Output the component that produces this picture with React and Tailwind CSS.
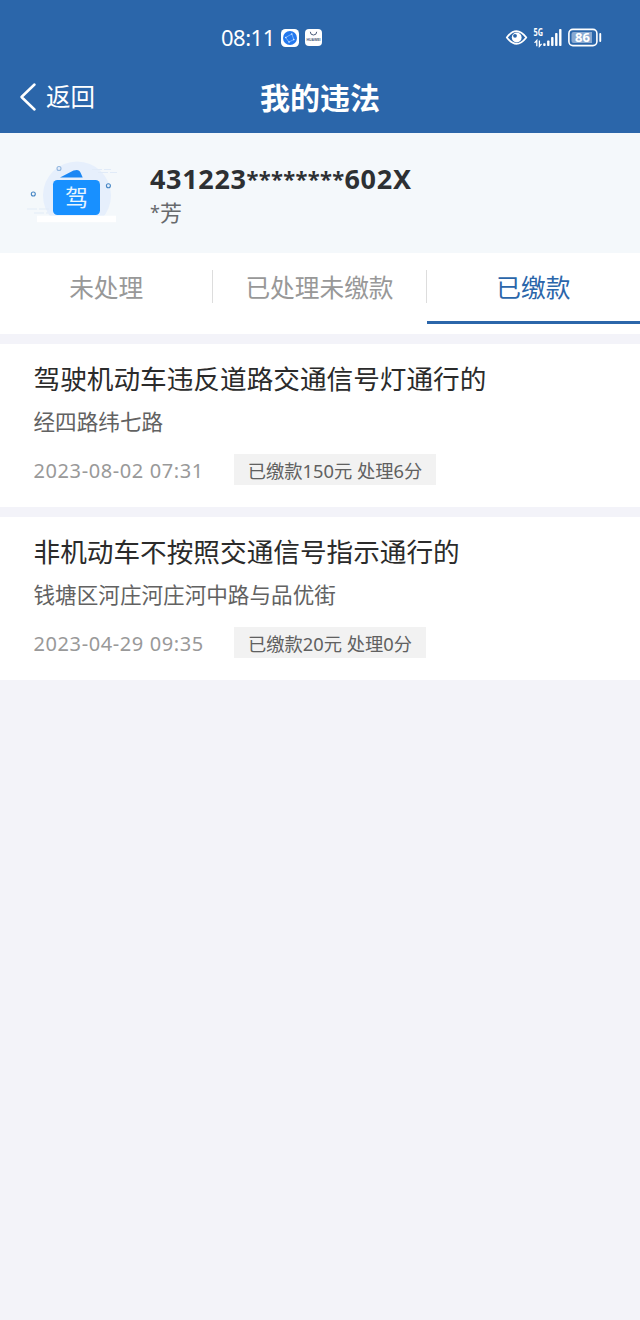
import React from "react";

const records = [
  {
    title: "驾驶机动车违反道路交通信号灯通行的",
    place: "经四路纬七路",
    time: "2023-08-02 07:31",
    status: "已缴款150元 处理6分",
    tagWidth: "w-[202px]",
  },
  {
    title: "非机动车不按照交通信号指示通行的",
    place: "钱塘区河庄河庄河中路与品优街",
    time: "2023-04-29 09:35",
    status: "已缴款20元 处理0分",
    tagWidth: "w-[192px]",
  },
];

const tabs = ["未处理", "已处理未缴款", "已缴款"];

function StatusBar() {
  return (
    <div className="flex h-[75px] items-center pl-[221px] pr-[38px] text-white">
      <span className="pb-[2px] text-[22px] leading-[30px] w-[60px] tracking-[-0.5px] whitespace-nowrap">08:11</span>
      <svg className="h-[18px] w-[18px]" viewBox="0 0 18 18">
        <rect width="18" height="18" rx="4.5" fill="#fff" />
        <circle cx="9" cy="9" r="7" fill="#2478ee" />
        <path d="M4.6 8.5 10.8 5M4.6 8.5 8 13M8 13 12.8 10.6M10.8 5 12.8 10.6" fill="none" stroke="#8dc0ff" strokeWidth=".8" />
        <g fill="#d9eaff"><circle cx="4.8" cy="8.5" r=".8" /><circle cx="10.8" cy="5" r=".8" /><circle cx="8" cy="13" r=".8" /><circle cx="12.8" cy="10.6" r=".8" /></g>
      </svg>
      <svg className="ml-[6px] h-[17px] w-[17px] overflow-visible" viewBox="0 0 17 17">
        <rect width="17" height="17" rx="4" fill="#fff" />
        <path d="M5.3 2.8a3.2 3.2 0 0 0 6.4 0" fill="none" stroke="#4a5b78" strokeWidth="1" />
        <text x="8.5" y="11.6" textAnchor="middle" textLength="14" lengthAdjust="spacingAndGlyphs" fontSize="4.2" fontWeight="700" fill="#4a5b78" className="font-['Liberation_Sans',sans-serif]">HUAWEI</text>
      </svg>
      <svg className="ml-auto h-[24px] w-[98px]" viewBox="504 26 98 24">
        <path d="M506.8 37.5Q516.5 24.8 526.3 37.5 516.5 50.2 506.8 37.5Z" fill="none" stroke="#fff" strokeWidth="1.8" strokeLinejoin="round" />
        <circle cx="516.7" cy="37.5" r="4.9" fill="#fff" />
        <circle cx="515" cy="35.8" r="1.9" fill="#2b66aa" />
        <text x="533.5" y="36.4" fontSize="10" fontWeight="700" fill="#fff" textLength="9.5" lengthAdjust="spacingAndGlyphs">5G</text>
        <path d="M536.8 46.3v-5.8l-2.2 2.4M539.4 40.5v5.8l2.2-2.4" fill="none" stroke="#fff" strokeWidth="1.3" />
        <g fill="#fff">
          <rect x="543.2" y="43.3" width="2.4" height="2.7" rx=".8" />
          <rect x="547.1" y="40.5" width="2.4" height="5.5" rx=".8" />
          <rect x="551.1" y="37" width="2.4" height="9" rx=".8" />
          <rect x="555.1" y="33" width="2.4" height="13" rx=".8" />
          <rect x="559.1" y="29" width="2.4" height="17" rx=".8" />
        </g>
        <rect x="568.9" y="29.4" width="28" height="16.2" rx="4" fill="none" stroke="#fff" strokeWidth="1.6" />
        <path d="M573.5 32h18.5v11h-18.5a2 2 0 0 1-2-2v-7a2 2 0 0 1 2-2Z" fill="#89a9d1" />
        <text x="582.4" y="42.2" textAnchor="middle" fontSize="13" fontWeight="700" fill="#fff">86</text>
        <rect x="599.3" y="33" width="1.9" height="9" rx=".9" fill="#fff" />
      </svg>
    </div>
  );
}

function LicenseIcon() {
  return (
    <svg className="h-[72px] w-[100px]" viewBox="22 154 100 72">
      <path d="M52.5 219a34 34 0 1 1 49 0Z" fill="#e6effc" />
      <path d="M92 169.5h19M98 172.5h19M27 209h23M34 213h14" stroke="#e1ebf8" strokeWidth="1.2" strokeDasharray="10 2" />
      <path d="M60 177.5 73.5 170.6q5.5-2.2 7.2 2.3l2 4.6Z" fill="#1b87f4" />
      <rect x="53" y="180" width="47" height="35" rx="4.5" fill="#1890ff" />
      <text x="76.5" y="205.5" textAnchor="middle" fontSize="23" fill="#e8f5ff">驾</text>
      <rect x="37" y="215.7" width="79" height="6.5" fill="#fff" />
      <circle cx="59" cy="168.5" r="2" fill="none" stroke="#91b6de" strokeWidth="1.1" />
      <circle cx="33.3" cy="194" r="2" fill="none" stroke="#4686c4" strokeWidth="1.1" />
      <circle cx="108.4" cy="185.7" r="2" fill="none" stroke="#4686c4" strokeWidth="1.1" />
    </svg>
  );
}

function Record({ item }) {
  return (
    <article className="h-[163px] bg-white pl-[33.5px] pt-[15px]">
      <h2 className="text-[26.65px] leading-[40px] whitespace-nowrap text-[#2b2b2b]">{item.title}</h2>
      <p className="mt-[6px] text-[21.6px] leading-[34px] whitespace-nowrap text-[#626262]">{item.place}</p>
      <div className="mt-[15px] flex h-[31px] items-center">
        <time className="w-[200.5px] pt-px text-[20px] leading-[31px] tracking-[0.6px] whitespace-nowrap text-[#999]">{item.time}</time>
        <span className={`${item.tagWidth} h-[31px] bg-[#f2f2f2] text-center text-[18.3px] leading-[33px] whitespace-nowrap text-[#606060]`}>{item.status}</span>
      </div>
    </article>
  );
}

export default function App() {
  return (
    <main className="min-h-[1320px] w-[640px] bg-[#f3f3f9] font-['Noto_Sans','Noto_Sans_CJK_SC',sans-serif]">
      <header className="h-[133px] bg-[#2b66aa] text-white">
        <StatusBar />
        <div className="grid h-[44px] grid-cols-[200px_240px_200px] items-center">
          <button className="flex items-center pl-[19px]">
            <svg className="h-[30px] w-[20px]" viewBox="0 0 20 30">
              <path d="M15.5 2.5 2.5 15l13 12.5" fill="none" stroke="#fff" strokeWidth="2.5" strokeLinecap="round" strokeLinejoin="round" />
            </svg>
            <span className="ml-[7px] text-[24.5px] leading-[44px]">返回</span>
          </button>
          <h1 className="h-[44px] text-center text-[30px] leading-[46px] font-bold">我的违法</h1>
        </div>
      </header>
      <section className="flex h-[120px] bg-[#f4f8fb] pl-[22px] pt-[21px]">
        <LicenseIcon />
        <div className="pl-[28px] pt-[6px]">
          <p className="h-[37px] text-[27px] leading-[38px] font-bold whitespace-nowrap text-[#2d3033]">
            <span className="tracking-[0.65px]">431223</span>
            <span className="inline-block -translate-y-[2.5px] text-[22px] leading-[30px] tracking-[0.3px]">********</span>
            <span className="tracking-[0.75px]">602X</span>
          </p>
          <p className="text-[22px] leading-[30px] text-[#66696c]">
            <span className="inline-block -translate-y-[2px] text-[18px] leading-[20px]">*</span>芳
          </p>
        </div>
      </section>
      <nav className="grid h-[81px] grid-cols-3 bg-white">
        {tabs.map((tab, i) => (
          <button
            key={tab}
            className={`flex h-[71px] flex-col ${i === 2 ? "border-b-[3px] border-[#2b66aa] text-[#2b66aa]" : "text-[#989898]"}`}
          >
            <span className={`mt-[17px] block h-[33px] w-full text-center text-[24.7px] leading-[35px] whitespace-nowrap ${i < 2 ? "border-r border-[#ddd]" : ""}`}>{tab}</span>
          </button>
        ))}
      </nav>
      <div className="mt-[10px] flex flex-col gap-[10px]">
        {records.map((item) => (
          <Record key={item.time} item={item} />
        ))}
      </div>
    </main>
  );
}
